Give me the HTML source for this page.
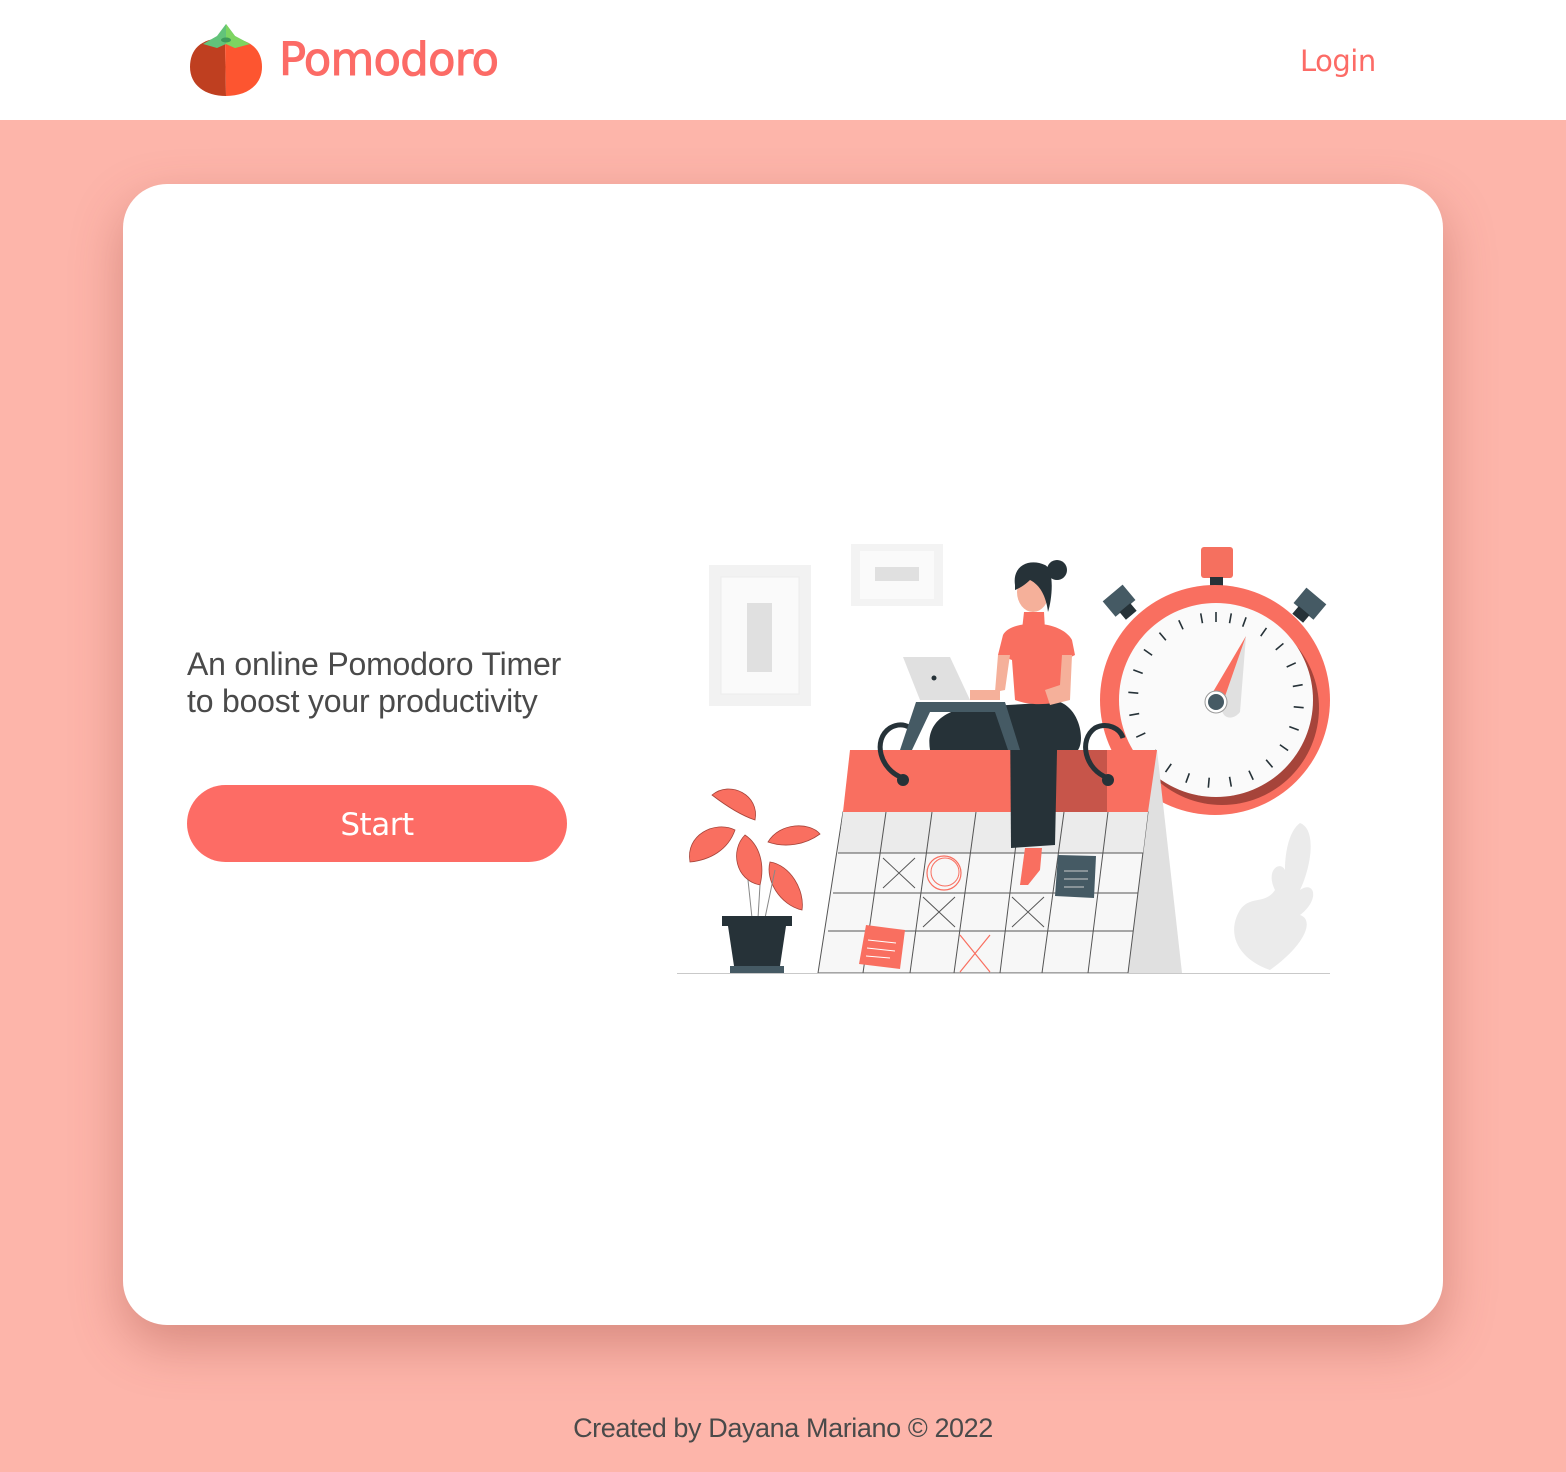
<!DOCTYPE html>
<html><head><meta charset="utf-8">
<style>
html,body{margin:0;padding:0}
body{width:1566px;height:1472px;overflow:hidden;background:#fdb5aa;position:relative;font-family:"Liberation Sans",Arial,sans-serif}
.hdr{position:absolute;left:0;top:0;width:1566px;height:120px;background:#fff}
.brand{position:absolute;left:279px;top:33px;font-family:"DejaVu Sans",sans-serif;font-size:45px;color:#fc6b66;letter-spacing:-0.8px;-webkit-text-stroke:1px #fc6b66}
.login{position:absolute;left:1300px;top:44px;font-family:"DejaVu Sans",sans-serif;font-size:29px;color:#fc6b66;letter-spacing:-0.5px}
.card{position:absolute;left:123px;top:184px;width:1320px;height:1141px;background:#fff;border-radius:44px;box-shadow:0 20px 50px rgba(150,60,50,0.35)}
.tag{position:absolute;left:187px;top:646px;font-size:32px;line-height:37px;color:#4a4a4a;letter-spacing:-0.2px}
.btn{position:absolute;left:187px;top:785px;width:380px;height:77px;border-radius:39px;background:#fd6c65;color:#fff;font-family:"DejaVu Sans",sans-serif;font-size:31px;text-align:center;line-height:80px;letter-spacing:-0.5px}
.foot{position:absolute;left:0;width:1566px;top:1413px;text-align:center;font-size:27px;color:#4a4a4a;letter-spacing:-0.4px}
</style></head><body>
<div class="hdr"></div>
<svg style="position:absolute;left:185px;top:20px" width="82" height="80" viewBox="0 0 82 80">
<path d="M40 18 C15 18 5 30 5 47 C5 65 20 76 41 76 Z" fill="#bf3f20"/>
<path d="M40 18 C66 18 77 30 77 47 C77 65 62 76 41 76 Z" fill="#fd5530"/>
<path d="M18 24 L32 16 L41 4 L50 16 L65 24 L50 28 L41 24 L32 28 Z" fill="#62c37a"/>
<path d="M41 4 L50 16 L65 24 L50 28 L41 24 Z" fill="#7ed560"/>
<ellipse cx="41" cy="20" rx="5" ry="2.5" fill="#3e9a5a"/>
</svg>
<div class="brand">Pomodoro</div>
<div class="login">Login</div>
<div class="card"></div>
<div class="tag">An online Pomodoro Timer<br>to boost your productivity</div>
<div class="btn">Start</div>
<svg style="position:absolute;left:0;top:0" width="1566" height="1472" viewBox="0 0 1566 1472">
<rect x="709" y="565" width="102" height="141" fill="#f2f2f2"/>
<rect x="721" y="577" width="78" height="117" fill="#fafafa" stroke="#ececec"/>
<rect x="747" y="603" width="25" height="69" fill="#e0e0e0"/>
<rect x="851" y="544" width="92" height="62" fill="#f3f3f3"/>
<rect x="860" y="551" width="74" height="48" fill="#fafafa"/>
<rect x="875" y="567" width="44" height="14" fill="#e0e0e0"/>
<path d="M1300 823 C1318 830 1310 870 1300 890 C1315 880 1320 900 1300 915 C1315 920 1305 945 1270 970 C1240 960 1225 935 1240 910 C1250 895 1265 905 1275 890 C1265 870 1280 860 1285 870 C1285 850 1290 830 1300 823Z" fill="#ebebeb"/>
<rect x="1201" y="547" width="32" height="31" rx="3" fill="#f5705f"/>
<rect x="1210" y="577" width="13" height="14" fill="#263238"/>
<g transform="rotate(-40 1121 603)"><rect x="1108" y="590" width="26" height="20" fill="#455a64"/><rect x="1114" y="609" width="14" height="10" fill="#263238"/></g>
<g transform="rotate(40 1308 606)"><rect x="1295" y="593" width="26" height="20" fill="#455a64"/><rect x="1301" y="612" width="14" height="10" fill="#263238"/></g>
<circle cx="1215" cy="700" r="115" fill="#f96f60"/>
<circle cx="1222" cy="708" r="97" fill="#a6443a"/>
<circle cx="1216" cy="700" r="97" fill="#fafafa"/>
<g stroke="#263238" stroke-width="1.6">
<line x1="1216" y1="612" x2="1216" y2="622"/>
<line x1="1216" y1="612" x2="1216" y2="622" transform="rotate(10 1216 700)"/>
<line x1="1216" y1="612" x2="1216" y2="622" transform="rotate(20 1216 700)"/>
<line x1="1216" y1="612" x2="1216" y2="622" transform="rotate(35 1216 700)"/>
<line x1="1216" y1="612" x2="1216" y2="622" transform="rotate(50 1216 700)"/>
<line x1="1216" y1="612" x2="1216" y2="622" transform="rotate(65 1216 700)"/>
<line x1="1216" y1="612" x2="1216" y2="622" transform="rotate(80 1216 700)"/>
<line x1="1216" y1="612" x2="1216" y2="622" transform="rotate(95 1216 700)"/>
<line x1="1216" y1="612" x2="1216" y2="622" transform="rotate(110 1216 700)"/>
<line x1="1216" y1="612" x2="1216" y2="622" transform="rotate(125 1216 700)"/>
<line x1="1216" y1="612" x2="1216" y2="622" transform="rotate(140 1216 700)"/>
<line x1="1216" y1="612" x2="1216" y2="622" transform="rotate(155 1216 700)"/>
<line x1="1216" y1="612" x2="1216" y2="622" transform="rotate(170 1216 700)"/>
<line x1="1216" y1="612" x2="1216" y2="622" transform="rotate(185 1216 700)"/>
<line x1="1216" y1="612" x2="1216" y2="622" transform="rotate(200 1216 700)"/>
<line x1="1216" y1="612" x2="1216" y2="622" transform="rotate(215 1216 700)"/>
<line x1="1216" y1="612" x2="1216" y2="622" transform="rotate(230 1216 700)"/>
<line x1="1216" y1="612" x2="1216" y2="622" transform="rotate(245 1216 700)"/>
<line x1="1216" y1="612" x2="1216" y2="622" transform="rotate(260 1216 700)"/>
<line x1="1216" y1="612" x2="1216" y2="622" transform="rotate(275 1216 700)"/>
<line x1="1216" y1="612" x2="1216" y2="622" transform="rotate(290 1216 700)"/>
<line x1="1216" y1="612" x2="1216" y2="622" transform="rotate(305 1216 700)"/>
<line x1="1216" y1="612" x2="1216" y2="622" transform="rotate(320 1216 700)"/>
<line x1="1216" y1="612" x2="1216" y2="622" transform="rotate(335 1216 700)"/>
<line x1="1216" y1="612" x2="1216" y2="622" transform="rotate(350 1216 700)"/>
</g>
<path d="M1246 636 L1240 712 C1232 722 1220 718 1222 705Z" fill="#e0e0e0"/>
<path d="M1246 636 L1222 705 L1210 697Z" fill="#f96f60"/>
<circle cx="1216" cy="702" r="11" fill="#fff" stroke="#999"/>
<circle cx="1216" cy="702" r="8" fill="#455a64"/>
<path d="M1148 750 L1157 750 L1182 973 L1128 973Z" fill="#e0e0e0"/>
<path d="M843 812 L1148 812 L1128 973 L818 973Z" fill="#f7f7f7" stroke="#555" stroke-width="1"/>
<path d="M843 812 L1148 812 L1143 853 L838 853Z" fill="#ebebeb"/>
<g stroke="#555" stroke-width="1" fill="none">
<line x1="838" y1="853" x2="1143" y2="853"/><line x1="833" y1="893" x2="1138" y2="893"/><line x1="828" y1="931" x2="1133" y2="931"/>
<line x1="886" y1="812" x2="863" y2="973"/><line x1="932" y1="812" x2="910" y2="973"/><line x1="976" y1="812" x2="954" y2="973"/><line x1="1020" y1="812" x2="1000" y2="973"/><line x1="1064" y1="812" x2="1042" y2="973"/><line x1="1108" y1="812" x2="1088" y2="973"/>
<path d="M883 858 L915 888 M915 858 L883 888 M923 897 L955 927 M955 897 L923 927 M1012 897 L1044 927 M1044 897 L1012 927"/>
</g>
<path d="M960 935 L990 972 M990 935 L960 972" stroke="#f96f60" stroke-width="1.2"/>
<circle cx="944" cy="873" r="17" fill="none" stroke="#f96f60" stroke-width="1.2"/>
<circle cx="945" cy="872" r="14" fill="none" stroke="#f96f60" stroke-width="1"/>
<path d="M866 925 L905 930 L900 969 L859 964Z" fill="#f96f60"/>
<path d="M868 940 L896 943 M867 948 L895 951 M866 956 L890 958" stroke="#fff" stroke-width="1"/>
<path d="M1058 855 L1096 856 L1094 898 L1055 896Z" fill="#455a64"/>
<path d="M1064 871 L1088 871 M1064 879 L1088 879 M1064 887 L1084 887" stroke="#ccc"/>
<path d="M850 750 L1157 750 L1148 812 L843 812Z" fill="#f96f60"/>
<path d="M1055 750 L1107 750 L1107 812 L1055 812Z" fill="#c7554a"/>
<path d="M903 778 C880 770 872 740 890 728 C900 722 912 725 915 735" fill="none" stroke="#263238" stroke-width="5"/>
<circle cx="903" cy="780" r="6" fill="#263238"/>
<path d="M1108 778 C1085 770 1078 740 1095 728 C1107 722 1120 728 1123 738" fill="none" stroke="#263238" stroke-width="5"/>
<circle cx="1108" cy="780" r="6" fill="#263238"/>
<path d="M930 750 C925 720 950 705 990 706 L1060 702 C1080 710 1085 740 1078 750Z" fill="#263238"/>
<path d="M1010 710 L1058 705 L1055 845 L1011 848Z" fill="#263238"/>
<path d="M916 702 L1005 702 L1020 750 L1008 750 L995 712 L930 712 L912 750 L900 750Z" fill="#455a64"/>
<path d="M903 657 L950 657 L970 700 L920 700Z" fill="#e0e0e0"/>
<circle cx="934" cy="678" r="2.5" fill="#263238"/>
<path d="M970 690 L1000 690 L1000 700 L970 700Z" fill="#f5b09a"/>
<path d="M1003 635 C1010 620 1060 618 1072 640 L1075 655 L1065 660 L1067 700 C1050 705 1030 706 1015 700 L1012 660 L998 655Z" fill="#f96f60"/>
<path d="M998 655 L1010 655 L1005 690 L995 692Z M1062 655 L1072 655 L1070 700 L1050 705 L1045 690 L1060 685Z" fill="#f5b09a"/>
<path d="M1024 612 L1044 612 L1045 630 L1022 630Z" fill="#f96f60"/>
<ellipse cx="1033" cy="592" rx="16" ry="20" fill="#f5b09a"/>
<path d="M1015 585 C1012 565 1030 558 1045 565 C1055 570 1052 600 1048 612 C1046 596 1040 585 1030 580 C1025 585 1020 588 1015 590Z" fill="#263238"/>
<circle cx="1057" cy="570" r="10" fill="#263238"/>
<path d="M1025 848 L1042 848 L1040 870 L1028 885 L1020 885Z" fill="#f96f60"/>
<g fill="#f96f60" stroke="#a6443a" stroke-width="0.8">
<path d="M712 795 C730 780 760 795 755 820 C740 815 725 805 712 795Z"/>
<path d="M690 862 C685 835 715 820 735 830 C728 850 710 860 690 862Z"/>
<path d="M745 835 C730 850 735 880 760 885 C765 865 760 845 745 835Z"/>
<path d="M768 842 C780 822 810 822 820 834 C805 845 785 848 768 842Z"/>
<path d="M770 862 C765 880 780 905 802 910 C805 890 790 865 770 862Z"/>
</g>
<g stroke="#888" stroke-width="1"><line x1="748" y1="880" x2="752" y2="918"/><line x1="760" y1="885" x2="758" y2="918"/><line x1="775" y1="870" x2="765" y2="918"/></g>
<rect x="722" y="916" width="70" height="10" fill="#263238"/>
<path d="M728 926 L786 926 L780 966 L734 966Z" fill="#263238"/>
<rect x="730" y="966" width="54" height="7" fill="#455a64"/>
<line x1="677" y1="973.5" x2="1330" y2="973.5" stroke="#c9c9c9" stroke-width="1"/>
</svg>
<div class="foot">Created by Dayana Mariano © 2022</div>
</body></html>
